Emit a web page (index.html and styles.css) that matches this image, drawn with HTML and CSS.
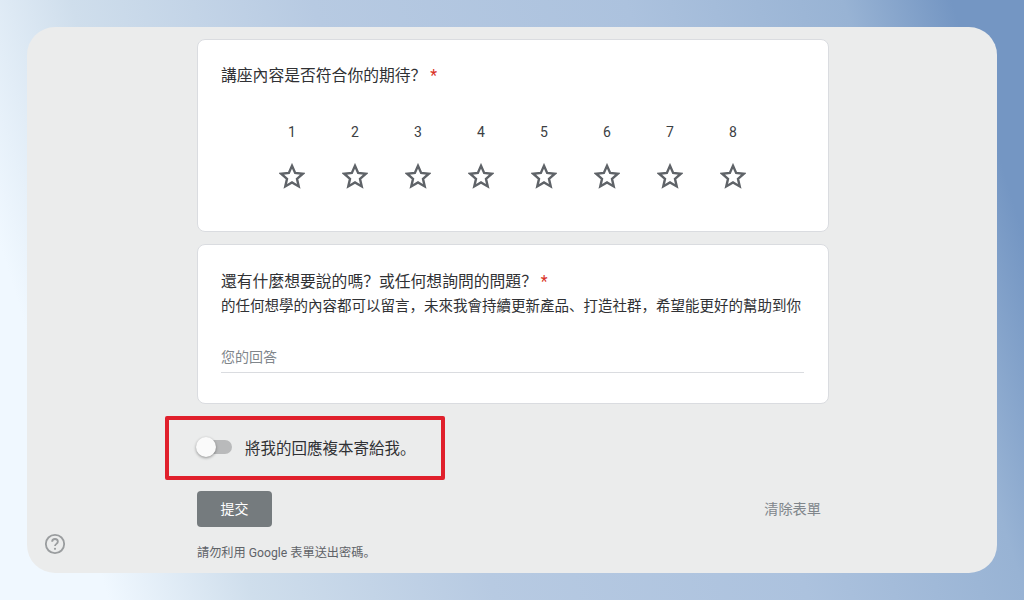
FILE: index.html
```html
<!DOCTYPE html>
<html lang="zh">
<head>
    <meta charset="UTF-8">
    <meta name="viewport" content="width=device-width, initial-scale=1.0">
    <title>表單</title>
    <link rel="stylesheet" href="styles.css">
</head>
<body>
    <div class="panel">
        <div class="form-column">
            <div class="card card-rating">
                <div class="question">講座內容是否符合你的期待&#xFF1F; <span class="required">*</span></div>
                <div class="rating">
                    <div class="rating-item"><span>1</span><svg class="star" viewBox="0 0 24 24"><path d="M12 2.6l2.9 6.6 7.1.7-5.4 4.7 1.6 7-6.2-3.7-6.2 3.7 1.6-7L2 9.9l7.1-.7z"/></svg></div>
                    <div class="rating-item"><span>2</span><svg class="star" viewBox="0 0 24 24"><path d="M12 2.6l2.9 6.6 7.1.7-5.4 4.7 1.6 7-6.2-3.7-6.2 3.7 1.6-7L2 9.9l7.1-.7z"/></svg></div>
                    <div class="rating-item"><span>3</span><svg class="star" viewBox="0 0 24 24"><path d="M12 2.6l2.9 6.6 7.1.7-5.4 4.7 1.6 7-6.2-3.7-6.2 3.7 1.6-7L2 9.9l7.1-.7z"/></svg></div>
                    <div class="rating-item"><span>4</span><svg class="star" viewBox="0 0 24 24"><path d="M12 2.6l2.9 6.6 7.1.7-5.4 4.7 1.6 7-6.2-3.7-6.2 3.7 1.6-7L2 9.9l7.1-.7z"/></svg></div>
                    <div class="rating-item"><span>5</span><svg class="star" viewBox="0 0 24 24"><path d="M12 2.6l2.9 6.6 7.1.7-5.4 4.7 1.6 7-6.2-3.7-6.2 3.7 1.6-7L2 9.9l7.1-.7z"/></svg></div>
                    <div class="rating-item"><span>6</span><svg class="star" viewBox="0 0 24 24"><path d="M12 2.6l2.9 6.6 7.1.7-5.4 4.7 1.6 7-6.2-3.7-6.2 3.7 1.6-7L2 9.9l7.1-.7z"/></svg></div>
                    <div class="rating-item"><span>7</span><svg class="star" viewBox="0 0 24 24"><path d="M12 2.6l2.9 6.6 7.1.7-5.4 4.7 1.6 7-6.2-3.7-6.2 3.7 1.6-7L2 9.9l7.1-.7z"/></svg></div>
                    <div class="rating-item"><span>8</span><svg class="star" viewBox="0 0 24 24"><path d="M12 2.6l2.9 6.6 7.1.7-5.4 4.7 1.6 7-6.2-3.7-6.2 3.7 1.6-7L2 9.9l7.1-.7z"/></svg></div>
                </div>
            </div>

            <div class="card card-answer">
                <div class="question">還有什麼想要說的嗎&#xFF1F;或任何想詢問的問題&#xFF1F; <span class="required">*</span></div>
                <div class="description">的任何想學的內容都可以留言&#xFF0C;未來我會持續更新產品、打造社群&#xFF0C;希望能更好的幫助到你</div>
                <div class="answer">您的回答</div>
            </div>

            <div class="copy-box">
                <div class="toggle"><div class="toggle-knob"></div></div>
                <span class="copy-label">將我的回應複本寄給我。</span>
            </div>

            <div class="actions">
                <button class="submit">提交</button>
                <span class="clear">清除表單</span>
            </div>

            <div class="note">請勿利用 Google 表單送出密碼。</div>
        </div>

        <svg class="help" viewBox="0 0 24 24">
            <circle cx="12" cy="12" r="10"/>
            <path d="M8.9 9.6a3.1 3.1 0 0 1 6.2 0c0 2.2-3.1 2.4-3.1 4.7"/>
            <circle class="help-dot" cx="12" cy="17.3" r="1.2"/>
        </svg>
    </div>
</body>
</html>
```

FILE: styles.css
```css
html, body {
    height: 100%;
}
body {
    margin: 0;
    padding: 27px;
    box-sizing: border-box;
    overflow: hidden;
    font-family: Roboto, "Noto Sans CJK SC", sans-serif;
    color: #3c4043;
    background: linear-gradient(73deg, #f0f8ff 9%, #cfdeec 21%, #b7cae2 41%, #acc2de 67%, #98b3d4 85%, #7496c3 94%);
}
.panel {
    position: relative;
    height: 546px;
    border-radius: 28px;
    background-color: #ebecec;
    overflow: hidden;
}
.form-column {
    width: 632px;
    margin-left: 170px;
    padding-top: 12px;
}
.card {
    box-sizing: border-box;
    background-color: white;
    border: 1px solid #dadce0;
    border-radius: 8px;
    padding: 24px 24px 0 23px;
}
.card-rating {
    height: 193px;
}
.card-answer {
    height: 160px;
    margin-top: 12px;
    padding-top: 25px;
}
.question {
    font-size: 15.8px;
    line-height: 24px;
    color: #303134;
}
.required {
    color: #d93025;
}
.rating {
    display: grid;
    grid-template-columns: repeat(8, 63px);
    justify-content: center;
    margin-top: 34px;
}
.rating-item {
    display: flex;
    flex-direction: column;
    align-items: center;
    font-size: 14px;
    color: #3c4043;
}
.rating-item span {
    line-height: 20px;
}
.star {
    width: 26px;
    height: 26px;
    margin-top: 21px;
    fill: none;
    stroke: #5f6368;
    stroke-width: 2.2;
}
.description {
    margin-top: 1px;
    font-size: 14.5px;
    line-height: 24px;
    color: #303134;
}
.answer {
    margin-top: 26px;
    height: 27px;
    line-height: 24px;
    font-size: 14px;
    color: #80868b;
    border-bottom: 1px solid #dadce0;
}
.copy-box {
    display: flex;
    align-items: center;
    box-sizing: border-box;
    width: 280px;
    height: 64px;
    margin: 12px 0 0 -32px;
    padding-left: 32px;
    padding-bottom: 3px;
    border: 4px solid #e0202c;
    border-radius: 2px;
}
.toggle {
    position: relative;
    width: 35px;
    height: 14px;
    margin-left: -4px;
    border-radius: 7px;
    background-color: #b9babb;
}
.toggle-knob {
    position: absolute;
    left: -1px;
    top: -3px;
    width: 20px;
    height: 20px;
    border-radius: 50%;
    background-color: #fafafa;
    box-shadow: 0 1px 3px rgba(0, 0, 0, 0.4);
}
.copy-label {
    margin-left: 13px;
    font-size: 15.5px;
    color: #303134;
}
.actions {
    display: flex;
    align-items: center;
    justify-content: space-between;
    margin-top: 11px;
}
.submit {
    width: 75px;
    height: 36px;
    padding-bottom: 3px;
    border: none;
    border-radius: 4px;
    background-color: #757b7e;
    color: white;
    font-family: inherit;
    font-size: 14px;
}
.clear {
    margin-right: 8px;
    margin-bottom: 2px;
    font-size: 14.2px;
    color: #80868b;
}
.note {
    margin-top: 18px;
    font-size: 12.2px;
    line-height: 16px;
    color: #5f6368;
}
.help {
    position: absolute;
    left: 17px;
    bottom: 18px;
    width: 22px;
    height: 22px;
    fill: none;
    stroke: #9a9d9f;
    stroke-width: 2;
}
.help-dot {
    fill: #9a9d9f;
    stroke: none;
}
```
